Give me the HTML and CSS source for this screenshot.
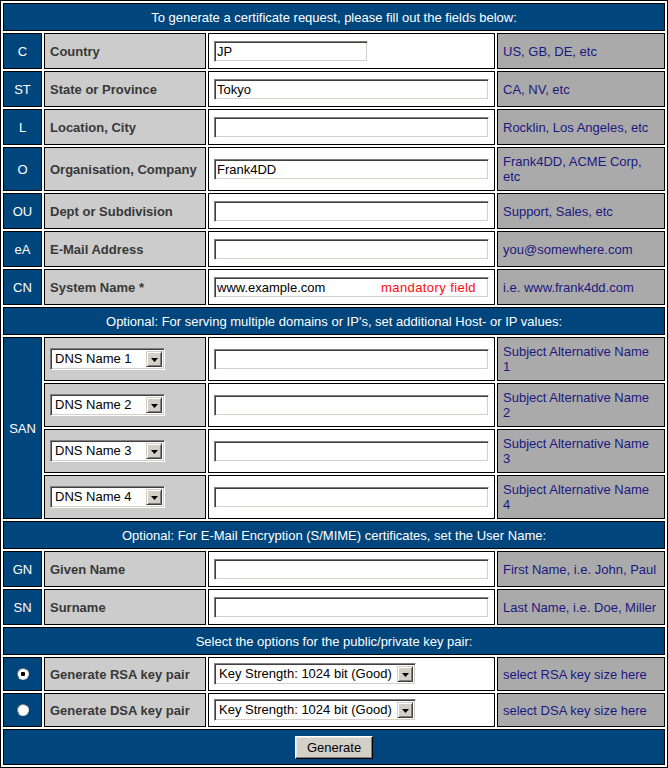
FILE: index.html
```html
<!DOCTYPE html>
<html lang="en">
<head>
<meta charset="utf-8">
<title>Certificate Request</title>
<link rel="stylesheet" href="styles.css">
</head>
<body>
<form class="csr">
<table class="grid">
  <colgroup><col class="c-id"><col class="c-label"><col class="c-field"><col class="c-hint"></colgroup>
  <tr class="head"><td colspan="4">To generate a certificate request, please fill out the fields below:</td></tr>
  <tr class="row"><td class="id">C</td><td class="label">Country</td><td class="field"><input class="text short" type="text" value="JP"></td><td class="hint">US, GB, DE, etc</td></tr>
  <tr class="row"><td class="id">ST</td><td class="label">State or Province</td><td class="field"><input class="text" type="text" value="Tokyo"></td><td class="hint">CA, NV, etc</td></tr>
  <tr class="row"><td class="id">L</td><td class="label">Location, City</td><td class="field"><input class="text" type="text" value=""></td><td class="hint">Rocklin, Los Angeles, etc</td></tr>
  <tr class="row-tall"><td class="id">O</td><td class="label">Organisation, Company</td><td class="field"><input class="text" type="text" value="Frank4DD"></td><td class="hint">Frank4DD, ACME Corp,<br>etc</td></tr>
  <tr class="row"><td class="id">OU</td><td class="label">Dept or Subdivision</td><td class="field"><input class="text" type="text" value=""></td><td class="hint">Support, Sales, etc</td></tr>
  <tr class="row"><td class="id">eA</td><td class="label">E-Mail Address</td><td class="field"><input class="text" type="text" value=""></td><td class="hint">you@somewhere.com</td></tr>
  <tr class="row"><td class="id">CN</td><td class="label">System Name *</td><td class="field"><span class="overlay-wrap"><input class="text" type="text" value="www.example.com"><span class="mandatory">mandatory field</span></span></td><td class="hint">i.e. www.frank4dd.com</td></tr>
  <tr class="head"><td colspan="4">Optional: For serving multiple domains or IP's, set additional Host- or IP values:</td></tr>
  <tr class="row-tall"><td class="id" rowspan="4">SAN</td><td class="label"><span class="select dns"><select><option>DNS Name 1</option></select><span class="arrow"><svg width="7" height="4" viewBox="0 0 7 4"><path d="M0 0H7L3.5 4Z" fill="#000"/></svg></span></span></td><td class="field"><input class="text" type="text" value=""></td><td class="hint">Subject Alternative Name<br>1</td></tr>
  <tr class="row-tall"><td class="label"><span class="select dns"><select><option>DNS Name 2</option></select><span class="arrow"><svg width="7" height="4" viewBox="0 0 7 4"><path d="M0 0H7L3.5 4Z" fill="#000"/></svg></span></span></td><td class="field"><input class="text" type="text" value=""></td><td class="hint">Subject Alternative Name<br>2</td></tr>
  <tr class="row-tall"><td class="label"><span class="select dns"><select><option>DNS Name 3</option></select><span class="arrow"><svg width="7" height="4" viewBox="0 0 7 4"><path d="M0 0H7L3.5 4Z" fill="#000"/></svg></span></span></td><td class="field"><input class="text" type="text" value=""></td><td class="hint">Subject Alternative Name<br>3</td></tr>
  <tr class="row-tall"><td class="label"><span class="select dns"><select><option>DNS Name 4</option></select><span class="arrow"><svg width="7" height="4" viewBox="0 0 7 4"><path d="M0 0H7L3.5 4Z" fill="#000"/></svg></span></span></td><td class="field"><input class="text" type="text" value=""></td><td class="hint">Subject Alternative Name<br>4</td></tr>
  <tr class="head"><td colspan="4">Optional: For E-Mail Encryption (S/MIME) certificates, set the User Name:</td></tr>
  <tr class="row"><td class="id">GN</td><td class="label">Given Name</td><td class="field"><input class="text" type="text" value=""></td><td class="hint">First Name, i.e. John, Paul</td></tr>
  <tr class="row"><td class="id">SN</td><td class="label">Surname</td><td class="field"><input class="text" type="text" value=""></td><td class="hint">Last Name, i.e. Doe, Miller</td></tr>
  <tr class="head"><td colspan="4">Select the options for the public/private key pair:</td></tr>
  <tr class="row-key"><td class="id"><input class="radio" type="radio" name="keytype" checked></td><td class="label">Generate RSA key pair</td><td class="field"><span class="select key"><select><option>Key Strength: 1024 bit (Good)</option></select><span class="arrow"><svg width="7" height="4" viewBox="0 0 7 4"><path d="M0 0H7L3.5 4Z" fill="#000"/></svg></span></span></td><td class="hint">select RSA key size here</td></tr>
  <tr class="row-key"><td class="id"><input class="radio" type="radio" name="keytype"></td><td class="label">Generate DSA key pair</td><td class="field"><span class="select key"><select><option>Key Strength: 1024 bit (Good)</option></select><span class="arrow"><svg width="7" height="4" viewBox="0 0 7 4"><path d="M0 0H7L3.5 4Z" fill="#000"/></svg></span></span></td><td class="hint">select DSA key size here</td></tr>
  <tr class="foot"><td colspan="4"><button class="btn" type="button">Generate</button></td></tr>
</table>
</form>
</body>
</html>
```

FILE: styles.css
```css
html, body {
  margin: 0;
  padding: 0;
  background: #ffffff;
}

body {
  font-family: "Liberation Sans", Arial, sans-serif;
  font-size: 13px;
}

.csr {
  margin: 0;
}

.grid {
  width: 668px;
  table-layout: fixed;
  border: 1px solid #000;
  border-spacing: 2px;
  background: #ffffff;
}

.c-id { width: 39px; }
.c-label { width: 162px; }
.c-field { width: 287px; }
.c-hint { width: 168px; }

.grid td {
  border: 1px solid #000;
  padding: 0 5px;
  vertical-align: middle;
  line-height: 15px;
  font-size: 13px;
}

.head { height: 28px; }
.row { height: 36px; }
.row-tall { height: 44px; }
.row-key { height: 34px; }
.foot { height: 36px; }

.head td {
  background: #00467c;
  color: #ffffff;
  text-align: center;
}

.grid td.id {
  background: #00467c;
  color: #ffffff;
  text-align: center;
  padding: 0;
}

.grid td.label {
  background: #cccccc;
  color: #383838;
  font-weight: bold;
}

.grid td.field {
  background: #ffffff;
}

.grid td.hint {
  background: #aaaaaa;
  color: #1c1880;
  white-space: nowrap;
  overflow: hidden;
}

.text {
  display: block;
  box-sizing: border-box;
  width: 100%;
  height: 21px;
  margin: 0;
  padding: 0 1px 0 2px;
  border: 1px solid;
  border-color: #808080 #ffffff #ffffff #808080;
  box-shadow: inset 1px 1px 0 #404040, inset -1px -1px 0 #d4d0c8;
  background: #ffffff;
  font-family: "Liberation Sans", Arial, sans-serif;
  font-size: 13px;
  color: #000;
  outline: none;
}

.text.short {
  width: 154px;
}

.overlay-wrap {
  position: relative;
  display: block;
}

.mandatory {
  position: absolute;
  right: 13px;
  top: 3px;
  color: #ff0a0a;
  font-size: 13px;
  line-height: 15px;
  font-weight: normal;
  letter-spacing: 0.4px;
}

.select {
  display: inline-flex;
  box-sizing: border-box;
  height: 22px;
  border: 1px solid;
  border-color: #808080 #ffffff #ffffff #808080;
  box-shadow: inset 1px 1px 0 #404040, inset -1px -1px 0 #d4d0c8;
  background: #ffffff;
  padding: 2px;
  vertical-align: middle;
}

.select.dns { width: 115px; }
.select.key { width: 202px; }

.select select {
  appearance: none;
  -webkit-appearance: none;
  flex: 1;
  min-width: 0;
  border: 0;
  margin: 0;
  padding: 0 0 0 2px;
  background: transparent;
  font-family: "Liberation Sans", Arial, sans-serif;
  font-size: 13px;
  font-weight: normal;
  color: #000;
  height: 16px;
  line-height: 16px;
  outline: none;
}

.select .arrow {
  box-sizing: border-box;
  width: 16px;
  height: 16px;
  display: flex;
  align-items: center;
  justify-content: center;
  background: #d4d0c8;
  border: 1px solid;
  border-color: #d4d0c8 #404040 #404040 #d4d0c8;
  box-shadow: inset 1px 1px 0 #ffffff, inset -1px -1px 0 #808080;
}

.select .arrow svg {
  display: block;
  margin-top: 1px;
}

.radio {
  appearance: none;
  -webkit-appearance: none;
  display: block;
  margin: 0 auto;
  box-sizing: border-box;
  width: 12px;
  height: 12px;
  border-radius: 50%;
  border: 1px solid;
  border-color: #808080 #e0e0e0 #e0e0e0 #808080;
  background: #ffffff;
}

.radio:checked {
  background: radial-gradient(circle, #000 0 2px, #ffffff 2.5px);
}

.foot td {
  background: #00467c;
  text-align: center;
}

.btn {
  box-sizing: border-box;
  width: 78px;
  height: 23px;
  margin: 0;
  padding: 0;
  background: #d4d0c8;
  border: 1px solid;
  border-color: #ffffff #000000 #000000 #ffffff;
  box-shadow: inset -1px -1px 0 #808080, inset 1px 1px 0 #e8e6e0;
  font-family: "Liberation Sans", Arial, sans-serif;
  font-size: 13px;
  color: #000;
}
```
